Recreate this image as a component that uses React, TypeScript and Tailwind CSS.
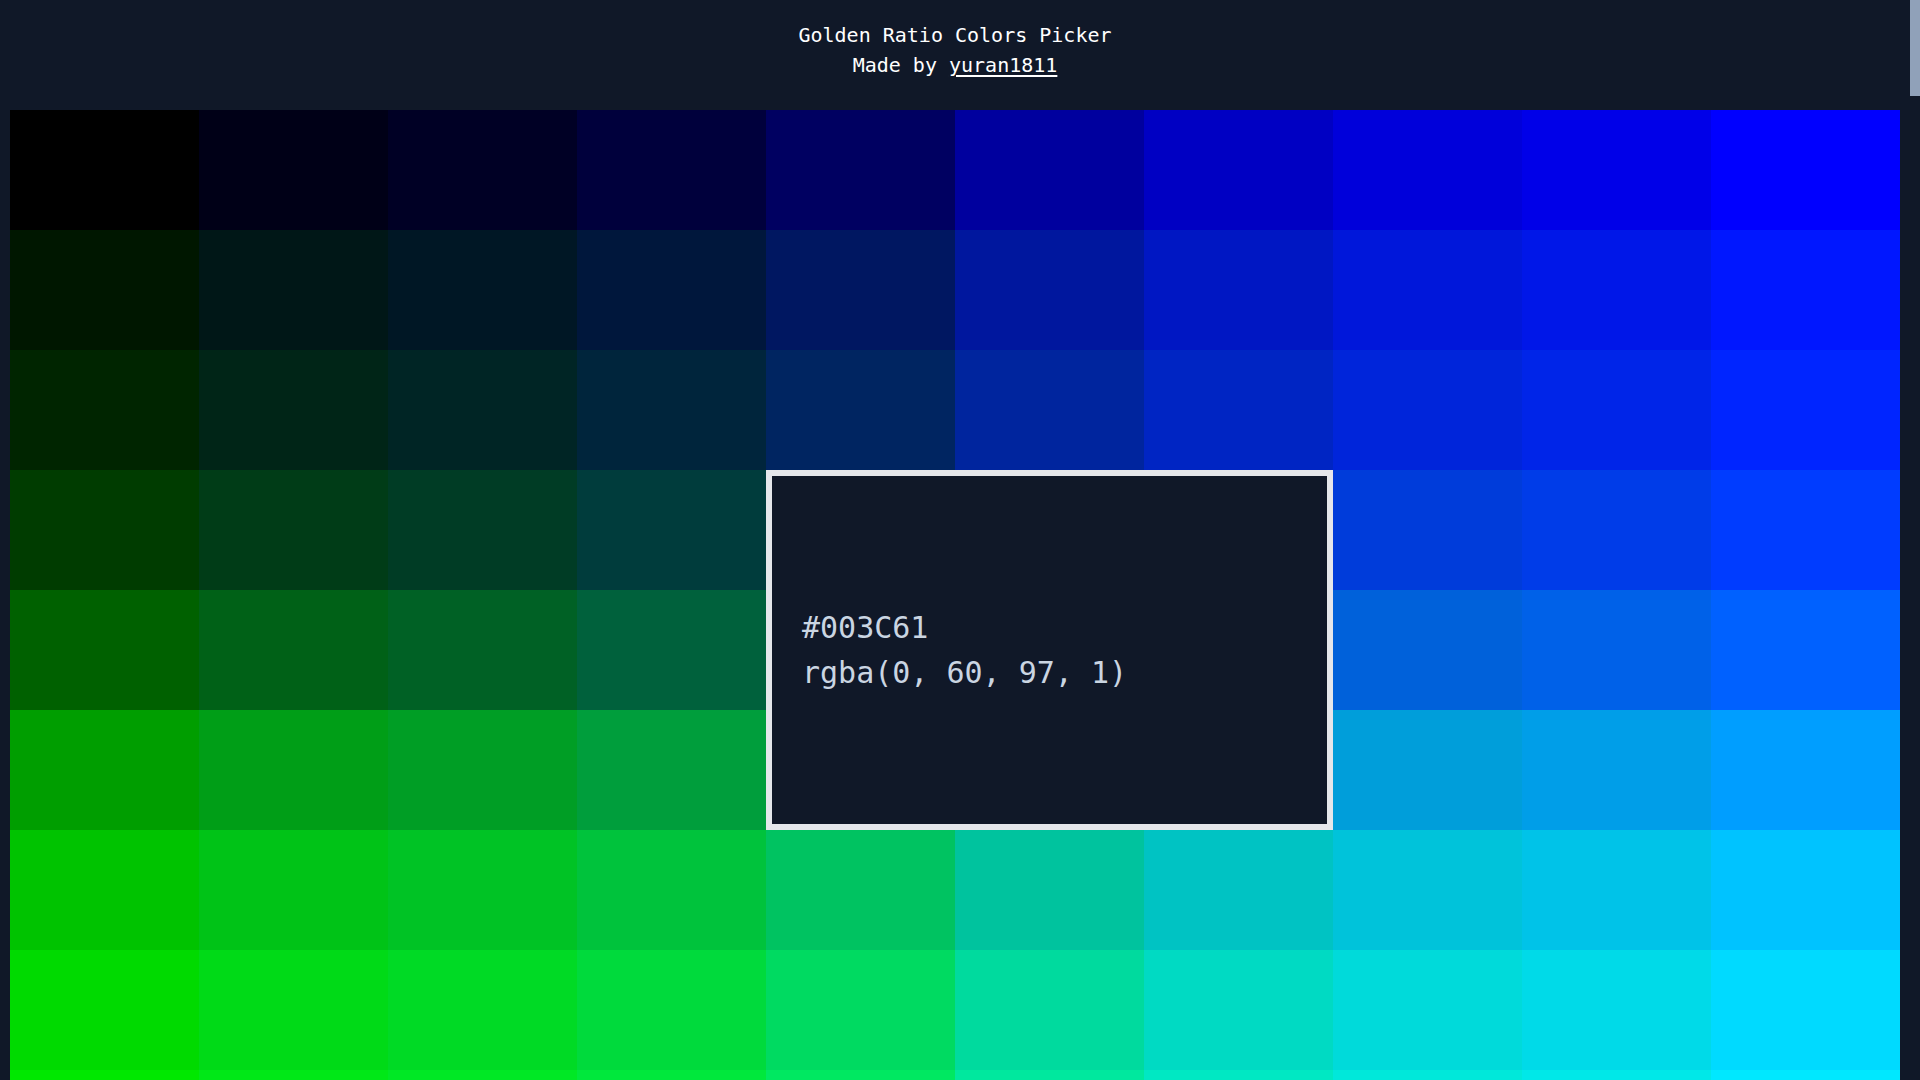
import { useMemo, useState } from 'react';

// Golden ratio steps: 255 / φ^k for the lower half, mirrored for the upper half
const STEPS = [0, 23, 37, 60, 97, 158, 195, 218, 232, 255];

interface Swatch {
  r: number;
  g: number;
  b: number;
  hex: string;
}

const toHex = (n: number) => n.toString(16).padStart(2, '0').toUpperCase();

export default function App() {
  const [selected, setSelected] = useState({ row: 3, col: 4 });

  // one row per (r, g) pair, blue runs across the columns
  const rows = useMemo(() => {
    const out: Swatch[][] = [];
    STEPS.forEach((r) => {
      STEPS.forEach((g) => {
        out.push(
          STEPS.map((b) => ({ r, g, b, hex: `#${toHex(r)}${toHex(g)}${toHex(b)}` }))
        );
      });
    });
    return out;
  }, []);

  return (
    <div
      className="flex h-screen bg-gray-900"
      style={{ fontFamily: '"DejaVu Sans Mono", "Liberation Mono", monospace' }}
    >
      <div className="flex-1 overflow-y-auto [&::-webkit-scrollbar]:hidden">
        {/* Header */}
        <header className="py-5 text-center text-[20px] leading-[30px] text-white">
          <h1>Golden Ratio Colors Picker</h1>
          <p>
            Made by{' '}
            <a href="#" className="underline decoration-2 underline-offset-[3px]">
              yuran1811
            </a>
          </p>
        </header>

        {/* Color grid */}
        <main className="p-[10px]">
          <div className="grid grid-cols-10">
            {rows.map((row, ri) =>
              row.map((c, ci) => {
                const active = selected.row === ri && selected.col === ci;
                return (
                  <div
                    key={`${ri}-${ci}`}
                    className="relative h-[120px]"
                    style={{ backgroundColor: c.hex }}
                    onMouseEnter={() => setSelected({ row: ri, col: ci })}
                  >
                    {active && (
                      <div className="absolute left-0 top-0 z-10 flex h-[300%] w-[300%] flex-col justify-center border-[6px] border-gray-200 bg-gray-900 pl-[30px] text-[30px] leading-[45px] text-slate-300">
                        <span>{c.hex}</span>
                        <span>{`rgba(${c.r}, ${c.g}, ${c.b}, 1)`}</span>
                      </div>
                    )}
                  </div>
                );
              })
            )}
          </div>
        </main>
      </div>

      {/* Scrollbar track */}
      <div className="flex w-[10px] flex-col">
        <div className="h-[96px] bg-slate-400" />
      </div>
    </div>
  );
}
